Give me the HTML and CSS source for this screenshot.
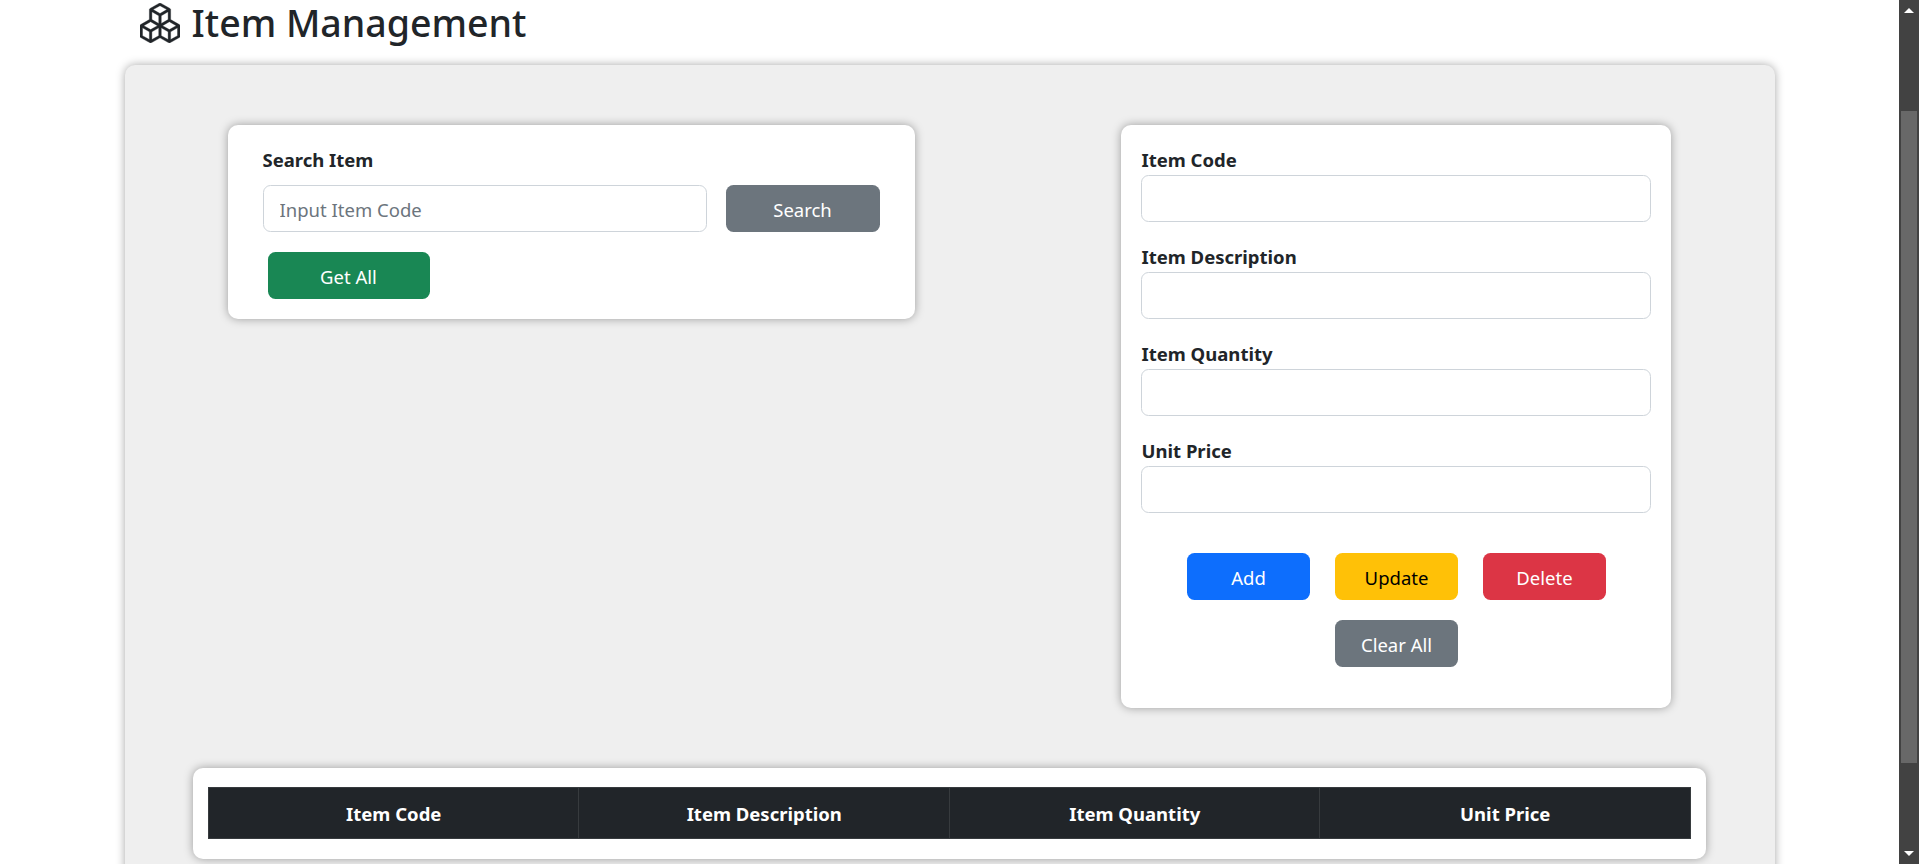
FILE: index.html
```html
<!DOCTYPE html>
<html lang="en">
<head>
  <meta charset="UTF-8">
  <meta name="viewport" content="width=device-width, initial-scale=1.0">
  <title>Item Management</title>
  <link rel="stylesheet" href="styles.css">
</head>
<body>
  <div class="page">
    <h1 class="page-title">
      <svg class="title-icon" viewBox="0 0 16 16" fill="currentColor" aria-hidden="true"><path d="M7.752.066a.5.5 0 0 1 .496 0l3.75 2.143a.5.5 0 0 1 .252.434v3.995l3.498 2A.5.5 0 0 1 16 9.07v4.286a.5.5 0 0 1-.252.434l-3.75 2.143a.5.5 0 0 1-.496 0l-3.502-2-3.502 2.001a.5.5 0 0 1-.496 0l-3.75-2.143A.5.5 0 0 1 0 13.357V9.071a.5.5 0 0 1 .252-.434L3.75 6.638V2.643a.5.5 0 0 1 .252-.434L7.752.066ZM4.25 7.504 1.508 9.071l2.742 1.567 2.742-1.567L4.25 7.504ZM7.5 9.933l-2.75 1.571v3.134l2.75-1.571V9.933Zm1 3.134 2.75 1.571v-3.134L8.5 9.933v3.134Zm.508-3.996 2.742 1.567 2.742-1.567-2.742-1.567-2.742 1.567Zm2.242-2.433V3.504L8.5 5.076V8.21l2.75-1.572ZM7.5 8.21V5.076L4.75 3.504v3.134L7.5 8.21ZM5.258 2.643 8 4.21l2.742-1.567L8 1.076 5.258 2.643ZM15 9.933l-2.75 1.571v3.134L15 13.067V9.933ZM3.75 14.638v-3.134L1 9.933v3.134l2.75 1.571Z"/></svg>
      Item Management
    </h1>

    <div class="panel">
      <div class="panel-row">
        <div class="card search-card">
          <label class="field-label" for="search-code">Search Item</label>
          <div class="search-row">
            <input class="text-input" id="search-code" type="text" placeholder="Input Item Code">
            <button class="btn btn-gray btn-search" type="button">Search</button>
          </div>
          <button class="btn btn-green btn-all" type="button">Get All</button>
        </div>

        <form class="card item-form">
          <div class="field">
            <label class="field-label" for="item-code">Item Code</label>
            <input class="text-input" id="item-code" type="text">
          </div>
          <div class="field">
            <label class="field-label" for="item-desc">Item Description</label>
            <input class="text-input" id="item-desc" type="text">
          </div>
          <div class="field">
            <label class="field-label" for="item-qty">Item Quantity</label>
            <input class="text-input" id="item-qty" type="text">
          </div>
          <div class="field">
            <label class="field-label" for="item-price">Unit Price</label>
            <input class="text-input" id="item-price" type="text">
          </div>
          <div class="form-buttons">
            <button class="btn btn-blue" type="button">Add</button>
            <button class="btn btn-yellow" type="button">Update</button>
            <button class="btn btn-red" type="button">Delete</button>
            <button class="btn btn-gray" type="button">Clear All</button>
          </div>
        </form>
      </div>

      <div class="card table-card">
        <table class="item-table">
          <thead>
            <tr>
              <th>Item Code</th>
              <th>Item Description</th>
              <th>Item Quantity</th>
              <th>Unit Price</th>
            </tr>
          </thead>
        </table>
      </div>
    </div>
  </div>

  <div class="scrollbar">
    <span class="arrow arrow-up"></span>
    <div class="scroll-track"><div class="scroll-thumb"></div></div>
    <span class="arrow arrow-down"></span>
  </div>
</body>
</html>
```

FILE: styles.css
```css
* { box-sizing: border-box; }
html, body {
  height: 100%;
}
body {
  margin: 0;
  display: flex;
  overflow: hidden;
  background: #fff;
  color: #212529;
  font-family: "Noto Sans", "Open Sans", sans-serif;
  font-size: 18.5px;
}
.page {
  flex: 1;
  height: 100vh;
  overflow: hidden;
}
.page-title {
  display: flex;
  align-items: center;
  gap: 12px;
  width: 1650px;
  height: 65px;
  margin: 0 auto;
  padding: 0 0 20px 15px;
  font-size: 37.5px;
  font-weight: 500;
  line-height: 45px;
}
.title-icon {
  width: 40px;
  height: 40px;
  flex: none;
  stroke: currentColor;
  stroke-width: .15;
}
.panel {
  width: 1650px;
  margin: 0 auto;
  padding: 60px 0 40px;
  background: #efefef;
  border-radius: 10px;
  box-shadow: 0 0 10px rgba(0, 0, 0, .35);
}
.panel-row {
  display: flex;
  justify-content: space-between;
  align-items: flex-start;
  padding: 0 104px 0 103px;
}
.card {
  background: #fff;
  border-radius: 10px;
  box-shadow: 0 0 10px rgba(0, 0, 0, .35);
}
.search-card {
  width: 687px;
  padding: 20px 35px;
}
.search-card .field-label {
  margin-bottom: 10px;
}
.search-row {
  display: flex;
  gap: 19px;
}
.btn-search {
  width: 154px;
  flex: none;
}
.btn-all {
  width: 162px;
  margin: 20px 0 0 5px;
}
.field-label {
  display: block;
  font-weight: 700;
  line-height: 30px;
}
.text-input {
  display: block;
  width: 100%;
  height: 47px;
  padding: 2px 16px 0;
  border: 1px solid #ced4da;
  border-radius: 7.5px;
  background: #fff;
  color: #212529;
  font: inherit;
}
.text-input::placeholder {
  color: #6c757d;
  opacity: 1;
}
.item-form {
  width: 550px;
  padding: 20px 20px 40.5px;
}
.item-form .field-label {
  padding-left: 1px;
}
.field {
  margin-bottom: 20px;
}
.form-buttons {
  display: flex;
  flex-wrap: wrap;
  justify-content: center;
  gap: 20px 25px;
  padding: 20px 0 0 2px;
}
.form-buttons .btn {
  width: 123px;
}
.btn {
  height: 47px;
  padding: 2px 0 0;
  border: 0;
  border-radius: 7.5px;
  color: #fff;
  font: inherit;
}
.btn-gray { background: #6c757d; }
.btn-green { background: #198754; }
.btn-blue { background: #0d6efd; }
.btn-yellow { background: #ffc107; color: #000; }
.btn-red { background: #dc3545; }
.table-card {
  margin: 60px 69px 0 68px;
  padding: 19.5px 15px;
}
.item-table {
  width: 100%;
  table-layout: fixed;
  border-collapse: collapse;
  background: #212529;
  color: #fff;
}
.item-table th {
  height: 51px;
  padding: 1px 0 0 1px;
  border: 1px solid #373b3e;
  font-weight: 700;
  text-align: center;
}
.scrollbar {
  display: flex;
  flex-direction: column;
  align-items: center;
  flex: none;
  width: 20px;
  height: 100vh;
  background: #424242;
}
.arrow {
  flex: none;
  width: 0;
  height: 0;
  border-left: 5px solid transparent;
  border-right: 5px solid transparent;
}
.arrow-up {
  margin: 8px 0;
  border-bottom: 5px solid #fff;
}
.arrow-down {
  margin: 8px 0;
  border-top: 5px solid #fff;
}
.scroll-track {
  flex: 1;
  width: 100%;
  padding: 90px 2px 0;
}
.scroll-thumb {
  height: 652px;
  background: #686868;
}
```
